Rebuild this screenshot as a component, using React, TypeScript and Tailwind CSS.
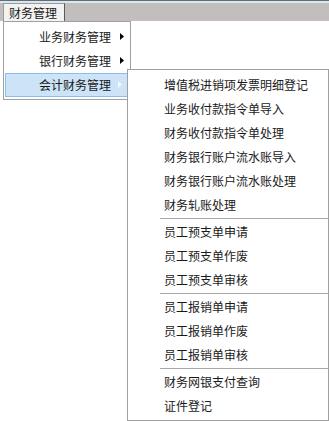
import React from 'react';

const font = { fontFamily: '"Noto Sans CJK SC", "Noto Sans", sans-serif' };

type Entry = { label: string } | { sep: true };

const subItems: Entry[] = [
  { label: '增值税进销项发票明细登记' },
  { label: '业务收付款指令单导入' },
  { label: '财务收付款指令单处理' },
  { label: '财务银行账户流水账导入' },
  { label: '财务银行账户流水账处理' },
  { label: '财务轧账处理' },
  { sep: true },
  { label: '员工预支单申请' },
  { label: '员工预支单作废' },
  { label: '员工预支单审核' },
  { sep: true },
  { label: '员工报销单申请' },
  { label: '员工报销单作废' },
  { label: '员工报销单审核' },
  { sep: true },
  { label: '财务网银支付查询' },
  { label: '证件登记' },
];

function Arrow({ light }: { light?: boolean }) {
  return (
    <svg width="4" height="7" viewBox="0 0 4 7" className="ml-auto mr-[5px] mb-[2px]">
      <path d="M0 0 L4 3.5 L0 7 Z" fill={light ? '#f4f8fc' : '#000'} />
    </svg>
  );
}

export default function App() {
  return (
    <div className="relative w-[329px] h-[421px] bg-white overflow-hidden text-[12px] text-[#1a1a1a]" style={font}>
      {/* menu bar */}
      <div className="h-[21px] flex flex-col">
        <div className="h-[1px] bg-[#5e6f79]" />
        <div className="flex-1 flex bg-[#c1bebd] border-t-[2px] border-[#dde6ec]">
          <div className="ml-[3px] h-[18px] w-[62px] bg-[#f2f2f2] border border-[#9a9a9a] border-r-[#5a5a5a] border-b-0 flex items-center pl-[5px] leading-none">
            财务管理
          </div>
        </div>
      </div>

      {/* first level menu */}
      <div className="absolute left-[3px] top-[21px] w-[128px] h-[79px] bg-white border border-[#a0a0a0] pt-[3px] px-[1px] flex flex-col">
        <div className="h-[24px] flex items-center pl-[34px]">
          业务财务管理
          <Arrow />
        </div>
        <div className="h-[24px] flex items-center pl-[34px]">
          银行财务管理
          <Arrow />
        </div>
        <div className="h-[24px] flex items-center pl-[33px] mr-[1px] bg-[#cde4f8] border border-[#8fbde9]">
          会计财务管理
          <Arrow light />
        </div>
      </div>

      {/* second level menu */}
      <div className="absolute left-[127px] top-[69px] w-[202px] h-[352px] bg-white border border-[#a0a0a0] pt-[3px] flex flex-col">
        {subItems.map((it, i) =>
          'sep' in it ? (
            <div key={i} className="h-[3px] pt-[1px] pl-[32px]">
              <div className="h-[1px] bg-[#a8a8a8]" />
            </div>
          ) : (
            <div key={i} className="h-[24px] flex items-center pl-[36px] whitespace-nowrap">
              {it.label}
            </div>
          )
        )}
      </div>
    </div>
  );
}
